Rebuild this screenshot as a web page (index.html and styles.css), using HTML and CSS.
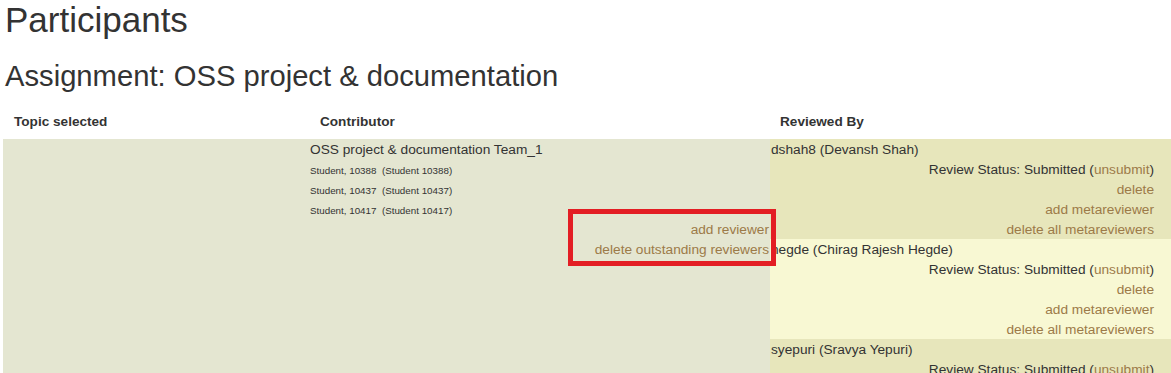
FILE: index.html
```html
<!DOCTYPE html>
<html lang="en">
<head>
  <meta charset="UTF-8" />
  <title>Participants</title>
  <link rel="stylesheet" href="styles.css">
</head>
<body>

  <h1>Participants</h1>
  <h2>Assignment: OSS project &amp; documentation</h2>

  <div class="table">
    <div class="th th-topic">Topic selected</div>
    <div class="th th-contrib">Contributor</div>
    <div class="th th-review">Reviewed By</div>

    <div class="cell topic"></div>

    <div class="cell contrib">
      <div class="team">OSS project &amp; documentation Team_1</div>
      <div class="student">Student, 10388&nbsp; (Student 10388)</div>
      <div class="student">Student, 10437&nbsp; (Student 10437)</div>
      <div class="student">Student, 10417&nbsp; (Student 10417)</div>
      <div class="action"><a href="#">add reviewer</a></div>
      <div class="action"><a href="#">delete outstanding reviewers</a></div>
      <div class="highlight"></div>
    </div>

    <div class="cell reviewers">
      <div class="reviewer dark">
        <div class="name">dshah8 (Devansh Shah)</div>
        <div class="action">Review Status: Submitted (<a href="#">unsubmit</a>)</div>
        <div class="action"><a href="#">delete</a></div>
        <div class="action"><a href="#">add metareviewer</a></div>
        <div class="action"><a href="#">delete all metareviewers</a></div>
      </div>
      <div class="reviewer light">
        <div class="name">hegde (Chirag Rajesh Hegde)</div>
        <div class="action">Review Status: Submitted (<a href="#">unsubmit</a>)</div>
        <div class="action"><a href="#">delete</a></div>
        <div class="action"><a href="#">add metareviewer</a></div>
        <div class="action"><a href="#">delete all metareviewers</a></div>
      </div>
      <div class="reviewer dark">
        <div class="name">syepuri (Sravya Yepuri)</div>
        <div class="action">Review Status: Submitted (<a href="#">unsubmit</a>)</div>
        <div class="action"><a href="#">delete</a></div>
        <div class="action"><a href="#">add metareviewer</a></div>
        <div class="action"><a href="#">delete all metareviewers</a></div>
      </div>
    </div>
  </div>

</body>
</html>
```

FILE: styles.css
```css
:root {
  --text: #333;
  --link: #9c7a48;
  --cell-bg: #e4e6d1;
  --dark-bg: #e7e6bb;
  --light-bg: #f8f8d3;
  --mark: #e31e24;
}
* {
  box-sizing: border-box;
}
html, body {
  margin: 0;
  padding: 0;
  background: #fff;
  overflow: hidden;
}
body {
  padding: 0 0 0 3px;
  font-family: "Liberation Sans", Arial, sans-serif;
  color: var(--text);
  font-size: 13.7px;
}
h1 {
  margin: 0 0 0 2px;
  font-size: 35px;
  font-weight: normal;
  line-height: 40px;
}
h2 {
  margin: 20px 0 0 2px;
  font-size: 29.2px;
  font-weight: normal;
  line-height: 33px;
}
a {
  color: var(--link);
  text-decoration: none;
}
.table {
  display: grid;
  grid-template-columns: 305px 462px 1fr;
  width: 1168px;
}
.th {
  font-weight: bold;
  font-size: 13.6px;
  line-height: 15px;
  padding: 21px 10px 10px;
}
.th-topic {
  padding-left: 11px;
}
.th-contrib {
  padding-left: 12px;
}
.cell {
  background: var(--cell-bg);
  line-height: 20px;
}
.contrib {
  position: relative;
  padding: 1px 1px 0 2px;
}
.student {
  font-size: 9.8px;
  line-height: 20px;
  padding-top: 1px;
  margin-bottom: -1px;
}
.action {
  text-align: right;
}
.reviewer {
  height: 100px;
  padding: 1px 17px 0 1px;
}
.dark {
  background: var(--dark-bg);
}
.light {
  background: var(--light-bg);
}
/* red annotation box drawn over the links */
.highlight {
  position: absolute;
  left: 260px;
  top: 70px;
  width: 208px;
  height: 57px;
  border: 5px solid var(--mark);
  z-index: 5;
}
```
